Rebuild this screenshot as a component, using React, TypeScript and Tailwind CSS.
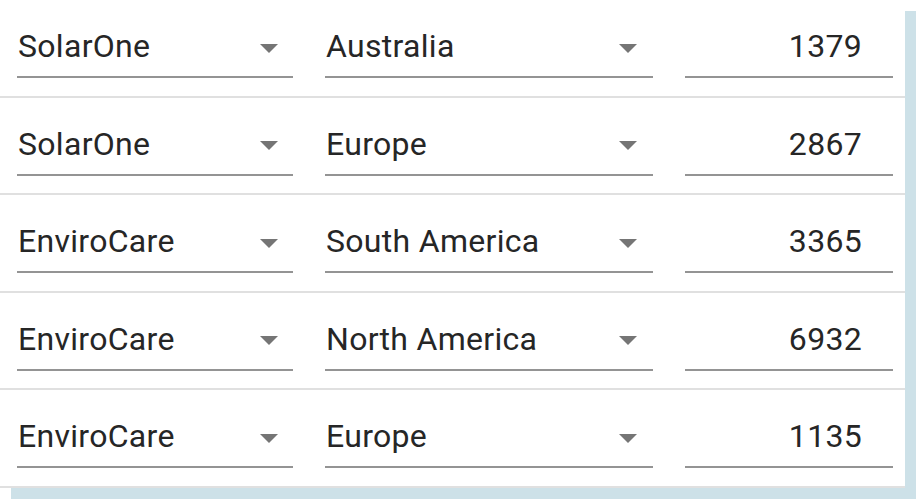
import React from 'react'

type Row = {
  company: string
  region: string
  amount: number
}

const rows: Row[] = [
  { company: 'SolarOne', region: 'Australia', amount: 1379 },
  { company: 'SolarOne', region: 'Europe', amount: 2867 },
  { company: 'EnviroCare', region: 'South America', amount: 3365 },
  { company: 'EnviroCare', region: 'North America', amount: 6932 },
  { company: 'EnviroCare', region: 'Europe', amount: 1135 },
]

function Arrow() {
  return (
    <svg width="18" height="9" viewBox="0 0 18 9" className="mt-[4px] shrink-0">
      <polygon points="0,0 18,0 9,9" fill="#757575" />
    </svg>
  )
}

function SelectField({ value, width, arrowGap }: { value: string; width: string; arrowGap: string }) {
  return (
    <div className={`${width} flex items-center justify-between border-b-2 border-[#949494] pb-[9px]`}>
      <span className="pl-px leading-[42px]">{value}</span>
      <div className={arrowGap}>
        <Arrow />
      </div>
    </div>
  )
}

export default function App() {
  return (
    <div className="min-h-screen bg-white">
      <div
        className="w-[905px] bg-white shadow-[11px_11px_0_#cde1e8] text-[32px] tracking-[0.3px] text-[#262626]"
        style={{ fontFamily: 'Roboto, "Liberation Sans", sans-serif' }}
      >
        {rows.map((r, i) => (
          <div key={i} className="flex gap-8 pl-[17px] pt-[25px] pb-[17.5px] border-b-2 border-[#e0e0e0]">
            <SelectField value={r.company} width="w-[276px]" arrowGap="mr-[15px]" />
            <SelectField value={r.region} width="w-[328px]" arrowGap="mr-[16px]" />
            <div className="w-[208px] border-b-2 border-[#949494] pb-[9px] pr-[31px] text-right leading-[42px]">
              {r.amount}
            </div>
          </div>
        ))}
      </div>
    </div>
  )
}
